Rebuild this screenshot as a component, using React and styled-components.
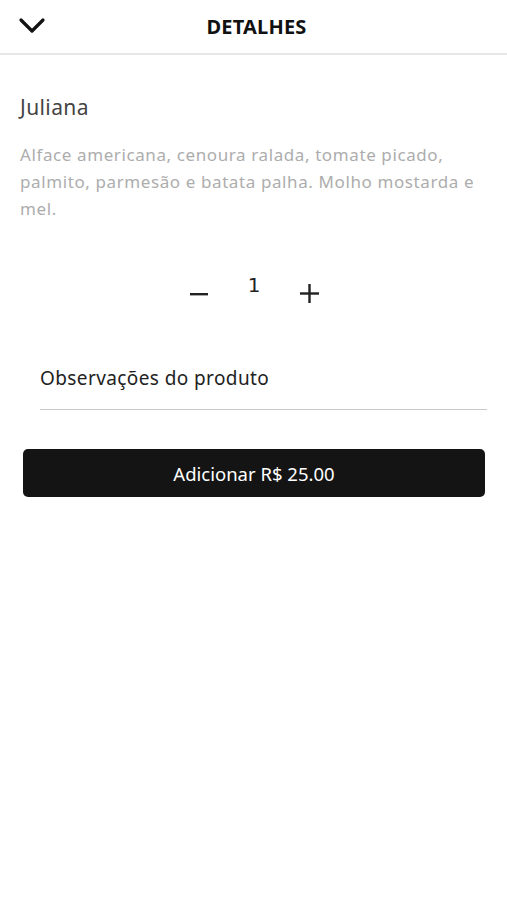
import React, { useState } from 'react';
import styled, { createGlobalStyle } from 'styled-components';

const GlobalStyle = createGlobalStyle`
  html, body {
    margin: 0;
    padding: 0;
    background: #ffffff;
  }
  body {
    font-family: "Noto Sans", "Open Sans", "Liberation Sans", sans-serif;
    -webkit-font-smoothing: antialiased;
  }
`;

const Page = styled.div`
  width: 100%;
  min-height: 900px;
  background: #ffffff;
`;

const Header = styled.header`
  position: relative;
  display: flex;
  align-items: center;
  justify-content: center;
  height: 53px;
  border-bottom: 2px solid #e6e6e6;
`;

const BackButton = styled.button`
  position: absolute;
  left: 18px;
  top: 15px;
  display: flex;
  padding: 0;
  border: none;
  background: transparent;
  cursor: pointer;
`;

const Title = styled.h1`
  margin: 0 0 0 6px;
  font-size: 20px;
  font-weight: 700;
  letter-spacing: 0.2px;
  color: #111111;
`;

const Content = styled.main`
  padding: 38px 12px 0 20px;
`;

const Name = styled.h2`
  margin: 0 0 20px;
  font-size: 21px;
  font-weight: 400;
  letter-spacing: 0.4px;
  color: #444444;
`;

const Description = styled.p`
  margin: 0;
  font-size: 17px;
  line-height: 27px;
  letter-spacing: 0.6px;
  color: #adadad;
`;

const Quantity = styled.div`
  display: flex;
  justify-content: center;
  align-items: center;
  gap: 40px;
  margin: 58px 0 0 -6px;
`;

const StepButton = styled.button`
  display: flex;
  padding: 0;
  border: none;
  background: transparent;
  cursor: pointer;
  margin-top: ${p => p.$offset || 0}px;
`;

const Count = styled.span`
  font-family: "DejaVu Sans", sans-serif;
  font-size: 20px;
  color: #222222;
  margin-top: -14px;
`;

const Actions = styled.section`
  display: flex;
  flex-direction: column;
  padding: 62px 20px 0 23px;
`;

const NotesField = styled.input`
  box-sizing: border-box;
  margin: 0 0 0 17px;
  padding: 0 0 18px;
  border: none;
  border-bottom: 1px solid #c8c8c8;
  font-family: inherit;
  font-size: 19px;
  letter-spacing: 0.4px;
  color: #222222;
  outline: none;
  background: transparent;

  &::placeholder {
    color: #222222;
  }
`;

const AddButton = styled.button`
  height: 48px;
  margin: 39px 2px 0 0;
  border: none;
  border-radius: 5px;
  background: #141414;
  color: #ffffff;
  font-family: inherit;
  font-size: 18.5px;
  letter-spacing: 0;
  cursor: pointer;
`;

const Chevron = () => (
  <svg width="28" height="20" viewBox="0 0 28 20" fill="none">
    <path d="M3 5 L14 16 L25 5" stroke="#111" strokeWidth="3.2" strokeLinecap="round" strokeLinejoin="round" />
  </svg>
);

const Minus = () => (
  <svg width="18" height="4" viewBox="0 0 18 4">
    <rect x="0" y="1" width="18" height="2.4" fill="#222" />
  </svg>
);

const Plus = () => (
  <svg width="19" height="19" viewBox="0 0 19 19">
    <rect x="0" y="8.3" width="19" height="2.4" fill="#222" />
    <rect x="8.3" y="0" width="2.4" height="19" fill="#222" />
  </svg>
);

export default function App() {
  const [qty, setQty] = useState(1);
  const price = 25;

  return (
    <Page>
      <GlobalStyle />
      <Header>
        <BackButton aria-label="Voltar">
          <Chevron />
        </BackButton>
        <Title>DETALHES</Title>
      </Header>
      <Content>
        <Name>Juliana</Name>
        <Description>
          Alface americana, cenoura ralada, tomate picado, palmito, parmesão e batata palha. Molho mostarda e mel.
        </Description>
        <Quantity>
          <StepButton $offset={4} onClick={() => setQty(q => Math.max(1, q - 1))} aria-label="Diminuir">
            <Minus />
          </StepButton>
          <Count>{qty}</Count>
          <StepButton $offset={4} onClick={() => setQty(q => q + 1)} aria-label="Aumentar">
            <Plus />
          </StepButton>
        </Quantity>
      </Content>
      <Actions>
        <NotesField placeholder="Observações do produto" />
        <AddButton>Adicionar R$ {(price * qty).toFixed(2)}</AddButton>
      </Actions>
    </Page>
  );
}
